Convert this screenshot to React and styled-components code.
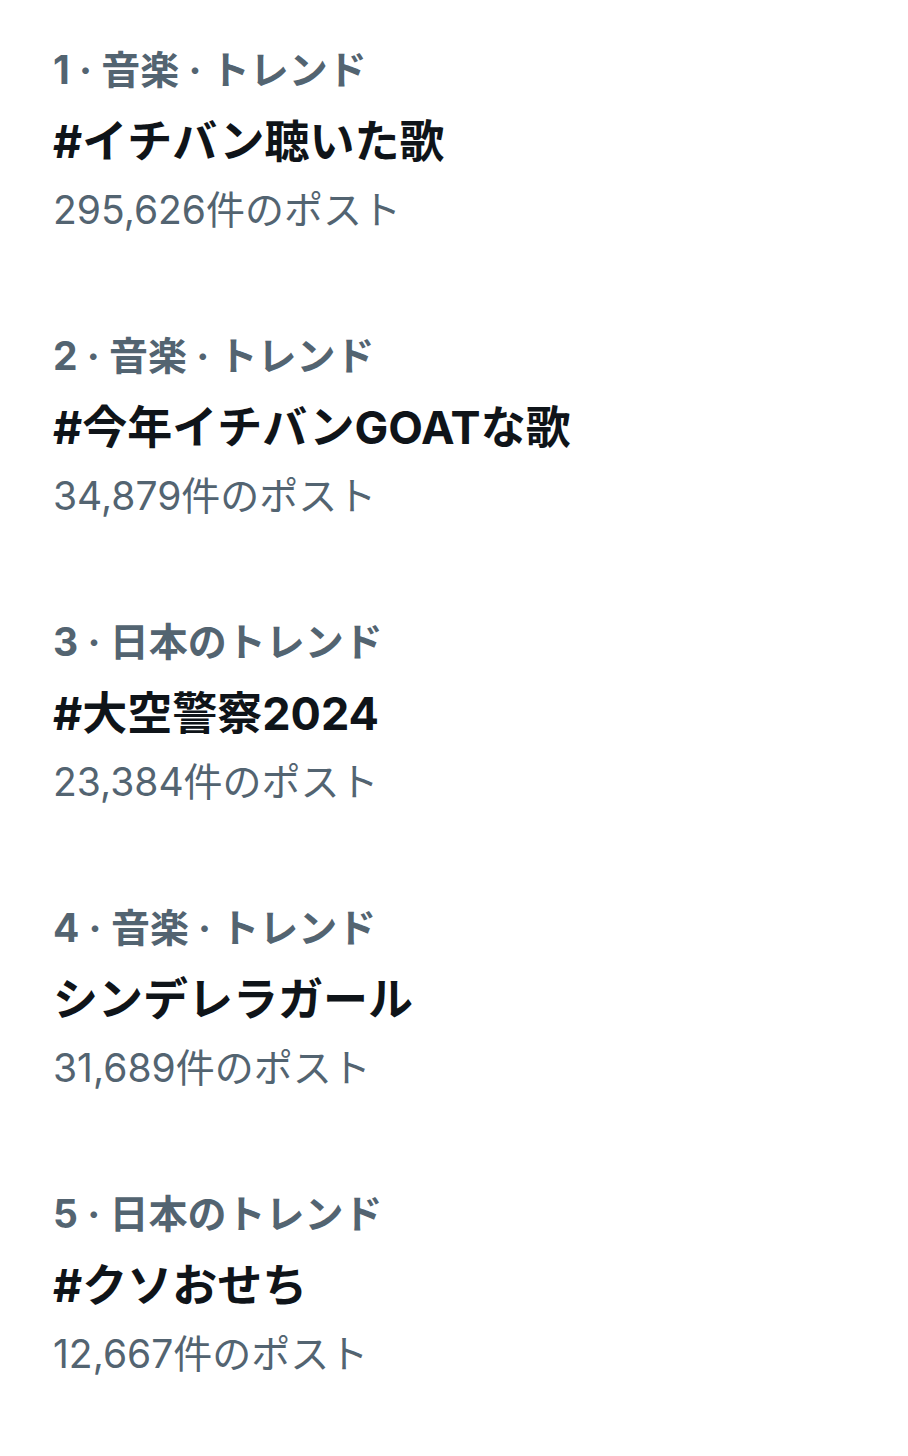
import React from 'react';
import styled, { createGlobalStyle } from 'styled-components';

const GlobalStyle = createGlobalStyle`
  html, body {
    margin: 0;
    padding: 0;
    background: #ffffff;
  }
  body {
    font-family: Inter, "Noto Sans CJK JP", sans-serif;
    -webkit-font-smoothing: antialiased;
  }
`;

const List = styled.div`
  display: flex;
  flex-direction: column;
  gap: 76px;
  padding: 35px 53px;
`;

const Item = styled.div`
  display: flex;
  flex-direction: column;
`;

const Meta = styled.div`
  color: #536471;
  font-size: 39px;
  font-weight: 700;
  line-height: 70px;
  white-space: nowrap;
`;

const Title = styled.div`
  color: #0f1419;
  font-size: 45px;
  font-weight: 700;
  line-height: 70px;
  padding-top: 2px;
  margin-bottom: -2px;
  white-space: nowrap;
`;

const Count = styled.div`
  color: #536471;
  font-size: 39px;
  font-weight: 400;
  line-height: 70px;
  white-space: nowrap;
`;

const trends = [
  { rank: 1, category: '音楽 · トレンド', title: '#イチバン聴いた歌', posts: '295,626' },
  { rank: 2, category: '音楽 · トレンド', title: '#今年イチバンGOATな歌', posts: '34,879' },
  { rank: 3, category: '日本のトレンド', title: '#大空警察2024', posts: '23,384' },
  { rank: 4, category: '音楽 · トレンド', title: 'シンデレラガール', posts: '31,689' },
  { rank: 5, category: '日本のトレンド', title: '#クソおせち', posts: '12,667' },
];

export default function App() {
  return (
    <>
      <GlobalStyle />
      <List>
        {trends.map((t) => (
          <Item key={t.rank}>
            <Meta>{t.rank} · {t.category}</Meta>
            <Title>{t.title}</Title>
            <Count>{t.posts}件のポスト</Count>
          </Item>
        ))}
      </List>
    </>
  );
}
